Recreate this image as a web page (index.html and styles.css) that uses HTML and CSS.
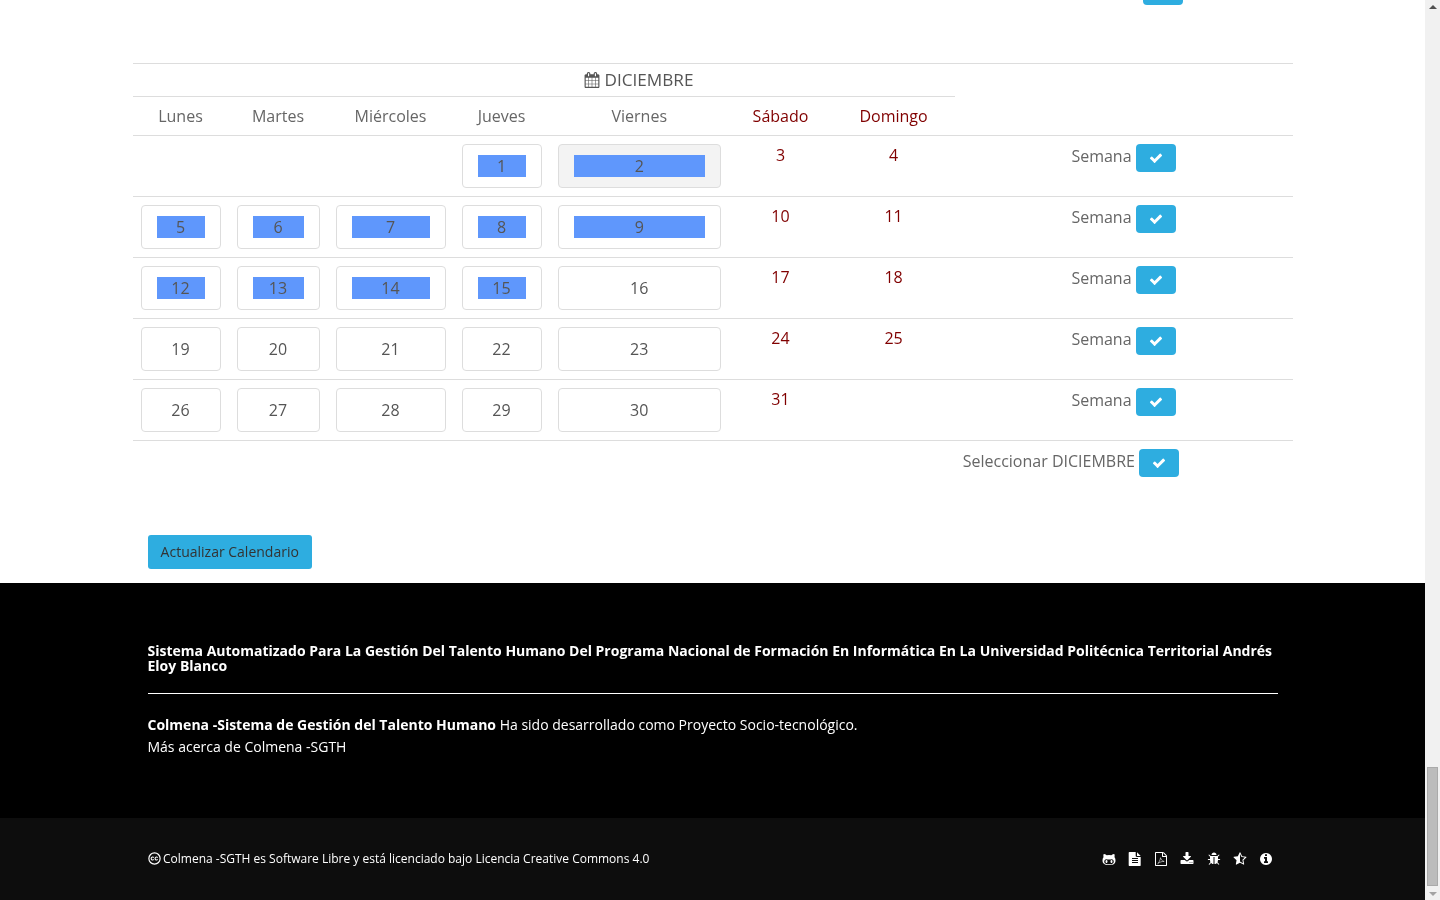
FILE: index.html
```html
<!DOCTYPE html>
<html lang="es">
<head>
<meta charset="utf-8">
<title>Colmena -SGTH</title>
<link rel="stylesheet" href="styles.css">
</head>
<body>
<svg class="defs" width="0" height="0">
  <symbol id="i-check" viewBox="0 0 1792 1792"><path d="M1671 566q0 40-28 68l-724 724-136 136q-28 28-68 28t-68-28l-136-136-362-362q-28-28-28-68t28-68l136-136q28-28 68-28t68 28l294 295 656-657q28-28 68-28t68 28l136 136q28 28 28 68z"/></symbol>
</svg>
<div class="page">
  <main class="content">
    <div class="top-strip"><span class="clipped-btn"></span></div>
    <table class="cal">
      <colgroup>
        <col class="c1"><col class="c2"><col class="c3"><col class="c4"><col class="c5"><col class="c6"><col class="c7"><col class="c8">
      </colgroup>
      <thead>
        <tr class="month-row">
          <th colspan="7" class="month">
            <svg class="cal-icon" viewBox="0 0 1792 1792"><path d="M192 1664h288v-288h-288v288zm352 0h320v-288h-320v288zm-352-352h288v-320h-288v320zm352 0h320v-320h-320v320zm-352-384h288v-288h-288v288zm736 736h320v-288h-320v288zm-384-736h320v-288h-320v288zm768 736h288v-288h-288v288zm-384-352h320v-320h-320v320zm-352-864v-288q0-13-9.500-22.500t-22.500-9.500h-64q-13 0-22.500 9.500t-9.500 22.500v288q0 13 9.500 22.500t22.500 9.500h64q13 0 22.500-9.500t9.500-22.500zm736 864h288v-320h-288v320zm-384-384h320v-288h-320v288zm384 0h288v-288h-288v288zm32-480v-288q0-13-9.500-22.500t-22.500-9.500h-64q-13 0-22.500 9.500t-9.500 22.500v288q0 13 9.500 22.500t22.500 9.500h64q13 0 22.500-9.500t9.500-22.500zm384-64v1280q0 52-38 90t-90 38h-1408q-52 0-90-38t-38-90v-1280q0-52 38-90t90-38h128v-96q0-66 47-113t113-47h64q66 0 113 47t47 113v96h384v-96q0-66 47-113t113-47h64q66 0 113 47t47 113v96h128q52 0 90 38t38 90z"/></svg>
            DICIEMBRE
          </th>
          <th rowspan="2" class="blank"></th>
        </tr>
        <tr class="days-row">
          <th>Lunes</th><th>Martes</th><th>Miércoles</th><th>Jueves</th><th>Viernes</th><th class="red">Sábado</th><th class="red">Domingo</th>
        </tr>
      </thead>
      <tbody>
        <tr>
          <td></td><td></td><td></td>
          <td><a class="day"><span class="sel">1</span></a></td>
          <td><a class="day hover"><span class="sel">2</span></a></td>
          <td class="red">3</td><td class="red">4</td>
          <td class="week">Semana <a class="ok"><svg class="check"><use href="#i-check"/></svg></a></td>
        </tr>
        <tr>
          <td><a class="day"><span class="sel">5</span></a></td>
          <td><a class="day"><span class="sel">6</span></a></td>
          <td><a class="day"><span class="sel">7</span></a></td>
          <td><a class="day"><span class="sel">8</span></a></td>
          <td><a class="day"><span class="sel">9</span></a></td>
          <td class="red">10</td><td class="red">11</td>
          <td class="week">Semana <a class="ok"><svg class="check"><use href="#i-check"/></svg></a></td>
        </tr>
        <tr>
          <td><a class="day"><span class="sel">12</span></a></td>
          <td><a class="day"><span class="sel">13</span></a></td>
          <td><a class="day"><span class="sel">14</span></a></td>
          <td><a class="day"><span class="sel">15</span></a></td>
          <td><a class="day">16</a></td>
          <td class="red">17</td><td class="red">18</td>
          <td class="week">Semana <a class="ok"><svg class="check"><use href="#i-check"/></svg></a></td>
        </tr>
        <tr>
          <td><a class="day">19</a></td>
          <td><a class="day">20</a></td>
          <td><a class="day">21</a></td>
          <td><a class="day">22</a></td>
          <td><a class="day">23</a></td>
          <td class="red">24</td><td class="red">25</td>
          <td class="week">Semana <a class="ok"><svg class="check"><use href="#i-check"/></svg></a></td>
        </tr>
        <tr>
          <td><a class="day">26</a></td>
          <td><a class="day">27</a></td>
          <td><a class="day">28</a></td>
          <td><a class="day">29</a></td>
          <td><a class="day">30</a></td>
          <td class="red">31</td><td></td>
          <td class="week">Semana <a class="ok"><svg class="check"><use href="#i-check"/></svg></a></td>
        </tr>
        <tr class="last-row">
          <td colspan="8" class="select-all">Seleccionar DICIEMBRE <a class="ok"><svg class="check"><use href="#i-check"/></svg></a></td>
        </tr>
      </tbody>
    </table>
    <div class="actions"><a class="update">Actualizar Calendario</a></div>
    <footer class="foot">
      <h4 class="foot-title">Sistema Automatizado Para La Gestión Del Talento Humano Del Programa Nacional de Formación En Informática En La Universidad Politécnica Territorial Andrés Eloy Blanco</h4>
      <hr class="foot-rule">
      <p class="foot-text"><strong>Colmena -Sistema de Gestión del Talento Humano</strong> Ha sido desarrollado como Proyecto Socio-tecnológico.<br>Más acerca de Colmena -SGTH</p>
    </footer>
    <div class="subfoot">
      <div class="license">
        <svg class="cc" viewBox="0 0 24 24"><circle cx="12" cy="12" r="10.4" fill="none" stroke="currentColor" stroke-width="2.2"/><path d="M10.6 10.2a2.7 2.7 0 1 0 0 3.600M17.800 10.2a2.7 2.700 0 1 0 0 3.600" fill="none" stroke="currentColor" stroke-width="2"/></svg>
        <span>Colmena -SGTH es Software Libre y está licenciado bajo Licencia Creative Commons 4.0</span>
      </div>
      <div class="links">
        <svg class="ico" viewBox="0 0 1792 1792"><path d="M704 1216q0 40-12.500 82t-43 76-72.500 34-72.500-34-43-76-12.500-82 12.500-82 43-76 72.500-34 72.500 34 43 76 12.500 82zm640 0q0 40-12.500 82t-43 76-72.500 34-72.500-34-43-76-12.500-82 12.500-82 43-76 72.500-34 72.500 34 43 76 12.500 82zm160 0q0-120-69-204t-187-84q-41 0-195 21-71 11-157 11t-157-11q-152-21-195-21-118 0-187 84t-69 204q0 88 32 153.500t81 103 122 60 140 29.500 149 7h168q82 0 149-7t140-29.500 122-60 81-103 32-153.500zm224-176q0 207-61 331-38 77-105.500 133t-141 86-170 47.500-171.500 22-167 4.500q-78 0-142-3t-147.500-12.500-152.500-30-137-51.500-121-81-86-115q-62-123-62-331 0-237 136-396-27-82-27-170 0-116 51-218 108 0 190 39.500t189 123.500q147-35 309-35 148 0 280 32 105-82 187-121t189-39q51 102 51 218 0 87-27 168 136 160 136 398z"/></svg>
        <svg class="ico" viewBox="0 0 1792 1792"><path d="M1596 476q14 14 28 36h-472v-472q22 14 36 28zm-476 164h504v1056q0 40-28 68t-68 28h-1344q-40 0-68-28t-28-68v-1600q0-40 28-68t68-28h800v504q0 40 28 68t68 28zm160 736v-64q0-14-9-23t-23-9h-704q-14 0-23 9t-9 23v64q0 14 9 23t23 9h704q14 0 23-9t9-23zm0-256v-64q0-14-9-23t-23-9h-704q-14 0-23 9t-9 23v64q0 14 9 23t23 9h704q14 0 23-9t9-23zm0-256v-64q0-14-9-23t-23-9h-704q-14 0-23 9t-9 23v64q0 14 9 23t23 9h704q14 0 23-9t9-23z"/></svg>
        <svg class="ico" viewBox="0 0 1792 1792"><path d="M1596 380q28 28 48 76t20 88v1152q0 40-28 68t-68 28h-1344q-40 0-68-28t-28-68v-1600q0-40 28-68t68-28h896q40 0 88 20t76 48zm-444-244v376h376q-10-29-22-41l-313-313q-12-12-41-22zm384 1528v-1024h-416q-40 0-68-28t-28-68v-416h-768v1536h1280z"/><path class="pdf" d="M470 1490c150-90 310-420 370-760 20 210 180 420 460 480-250-20-560 60-830 280z"/></svg>
        <svg class="ico" viewBox="0 0 1792 1792"><path d="M1344 1344q0-26-19-45t-45-19-45 19-19 45 19 45 45 19 45-19 19-45zm256 0q0-26-19-45t-45-19-45 19-19 45 19 45 45 19 45-19 19-45zm128-224v320q0 40-28 68t-68 28h-1472q-40 0-68-28t-28-68v-320q0-40 28-68t68-28h465l135 136q58 56 136 56t136-56l136-136h464q40 0 68 28t28 68zm-325-569q17 41-14 70l-448 448q-18 19-45 19t-45-19l-448-448q-31-29-14-70 17-39 59-39h256v-448q0-26 19-45t45-19h256q26 0 45 19t19 45v448h256q42 0 59 39z"/></svg>
        <svg class="ico" viewBox="0 0 1792 1792"><path d="M1696 960q0 26-19 45t-45 19h-224q0 171-67 290l208 209q19 19 19 45t-19 45q-18 19-45 19t-45-19l-198-197q-5 5-15 13t-42 28.500-65 36.500-82 29-97 13v-896h-128v896q-51 0-101.500-13.500t-87-33-66-39-43.500-32.500l-15-14-183 207q-20 21-48 21-24 0-43-16-19-18-20.500-44.500t15.500-46.500l202-227q-58-114-58-274h-224q-26 0-45-19t-19-45 19-45 45-19h224v-294l-173-173q-19-19-19-45t19-45 45-19 45 19l173 173h844l173-173q19-19 45-19t45 19 19 45-19 45l-173 173v294h224q26 0 45 19t19 45zm-480-576h-640q0-133 93.500-226.500t226.500-93.500 226.500 93.500 93.500 226.500z"/></svg>
        <svg class="ico" viewBox="0 0 1792 1792"><path d="M1250 957l257-250-356-52-66-10-30-60-159-322v963l59 31 318 168-60-355-12-66zm452-262l-363 354 86 500q5 33-6 51.500t-34 18.500q-17 0-40-12l-449-236-449 236q-23 12-40 12-23 0-34-18.500t-6-51.500l86-500-364-354q-32-32-23-59.500t54-34.500l502-73 225-455q20-41 49-41 28 0 49 41l225 455 502 73q45 7 54 34.500t-24 59.500z"/></svg>
        <svg class="ico" viewBox="0 0 1792 1792"><path d="M1152 1376v-160q0-14-9-23t-23-9h-96v-512q0-14-9-23t-23-9h-320q-14 0-23 9t-9 23v160q0 14 9 23t23 9h96v320h-96q-14 0-23 9t-9 23v160q0 14 9 23t23 9h448q14 0 23-9t9-23zm-128-896v-160q0-14-9-23t-23-9h-192q-14 0-23 9t-9 23v160q0 14 9 23t23 9h192q14 0 23-9t9-23zm640 416q0 209-103 385.500t-279.500 279.500-385.500 103-385.500-103-279.500-279.500-103-385.500 103-385.500 279.500-279.500 385.500-103 385.500 103 279.500 279.500 103 385.500z"/></svg>
      </div>
    </div>
  </main>
  <div class="scrollbar">
    <span class="arrow-up"></span>
    <span class="thumb"></span>
    <span class="arrow-down"></span>
  </div>
</div>
</body>
</html>
```
FILE: styles.css
```css
* { box-sizing: border-box; }
html, body { margin: 0; height: 100%; overflow: hidden; background: #fff; }
body { font-family: "Open Sans", "Liberation Sans", sans-serif; font-size: 16px; line-height: 22px; color: #666; }
.defs { position: absolute; }
.page { display: flex; height: 900px; }
.content { width: 1425px; height: 900px; overflow: hidden; display: flex; flex-direction: column; will-change: transform; }

.top-strip { height: 5px; padding-left: 1143px; flex: none; }
.clipped-btn { display: block; width: 40px; height: 5px; background: #2eade0; border-radius: 0 0 4px 4px; }

.cal { flex: none; width: 1160px; margin: 58px 0 0 132.5px; table-layout: fixed; border-collapse: separate; border-spacing: 0; }
.c1 { width: 96px; } .c2 { width: 99px; } .c3 { width: 126px; } .c4 { width: 96px; }
.c5 { width: 179.5px; } .c6 { width: 103px; } .c7 { width: 123px; } .c8 { width: 337.5px; }
.cal th, .cal td { border-top: 1px solid #ddd; padding: 8px; text-align: center; vertical-align: top; font-weight: 400; }
.cal .month { padding: 5px 8px 5px 198px; height: 33px; color: #555; font-size: 17.15px; }
.cal .blank { padding: 0; }
.days-row th { height: 39px; }
.cal-icon { width: 16px; height: 16px; fill: #555; vertical-align: -2px; }
.red { color: #800000; }
.cal th.red { color: #800000; }
.cal tbody tr { height: 61px; }
.cal tbody tr.last-row { height: 45px; }

.day { display: block; height: 44px; padding: 10px 15px; border: 1px solid #ddd; border-radius: 4px; background: #fff; color: #555; text-align: center; }
.day.hover { background: #f3f3f3; }
.sel { display: block; height: 22px; background: #5f97fc; color: #555; }

.week { color: #666; }
.cal .week { padding-right: 8.5px; }
.ok { display: inline-block; width: 40px; height: 28px; background: #2eade0; border-radius: 4px; vertical-align: middle; text-align: center; padding-top: 7px; }
.check { display: block; width: 14px; height: 14px; margin: 0 auto; fill: #fff; }
.cal .select-all { text-align: right; padding-right: 113.5px; }

.actions { flex: none; padding: 50px 0 14px 147.75px; }
.update { display: block; width: 164px; height: 34px; background: #2eade0; border-radius: 3px; color: #333; font-size: 14px; line-height: 34px; text-align: center; }

.foot { flex: none; height: 235px; background: #000; color: #fff; padding: 60px 147.5px 0 147.5px; font-size: 14px; }
.foot-title { margin: 0; font-size: 14px; line-height: 15px; font-weight: 700; }
.foot-rule { margin: 20px 0 20px; border: 0; border-top: 1px solid #fff; }
.foot-text { margin: 0; line-height: 22px; }
.foot-text strong { font-weight: 700; }

.subfoot { flex: 1; background: #0d0d0d; color: #fff; padding: 0 152px 0 147.5px; display: flex; justify-content: space-between; align-items: center; font-size: 12px; line-height: 17px; }
.license { display: flex; align-items: center; gap: 2.5px; margin-bottom: 2px; }
.cc { width: 13px; height: 13px; color: #fff; }
.links { display: flex; gap: 12.2px; }
.ico { width: 14px; height: 14px; fill: #fff; display: block; }
.pdf { fill: none; stroke: #fff; stroke-width: 70; }

.scrollbar { width: 15px; height: 900px; background: #f1f1f1; display: flex; flex-direction: column; align-items: center; }
.arrow-up { margin-top: 5px; width: 0; height: 0; border: 4px solid transparent; border-top: 0; border-bottom: 4px solid #505050; }
.thumb { margin-top: 758px; width: 11px; height: 119px; background: #bcbcbc; border: 1px solid #aaa; flex: none; }
.arrow-down { margin-top: 6px; width: 0; height: 0; border: 4px solid transparent; border-bottom: 0; border-top: 4px solid #a3a3a3; }
```
